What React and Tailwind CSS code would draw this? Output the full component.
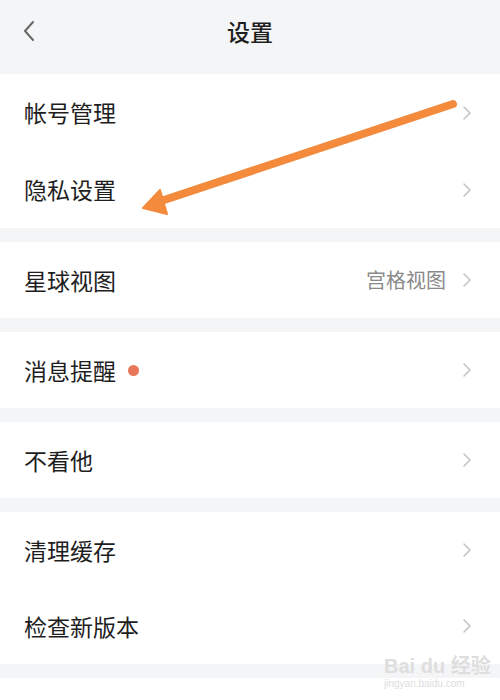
import React from "react";

const font = { fontFamily: '"Noto Sans CJK SC", "Noto Sans", sans-serif' };

function Chevron() {
  return (
    <svg width="10" height="16" viewBox="0 0 10 16" className="shrink-0">
      <path d="M2 2 L8 8 L2 14" fill="none" stroke="#c4c4c4" strokeWidth="1.6" strokeLinecap="round" strokeLinejoin="round" />
    </svg>
  );
}

function Row({ label, value, dot, tall }) {
  return (
    <div className={`flex items-center pl-6 pr-[28px] ${tall ? "h-[77px]" : "h-[76px]"}`}>
      <span className="text-[23px] leading-none text-[#1e1e1e]">{label}</span>
      {dot && <span className="ml-[12px] h-[11px] w-[11px] rounded-full bg-[#e9775a]" />}
      <div className="flex-1" />
      {value && <span className="mr-[16px] text-[20px] leading-none text-[#8a8a8a]">{value}</span>}
      <Chevron />
    </div>
  );
}

function Section({ children }) {
  return <div className="bg-white">{children}</div>;
}

export default function App() {
  return (
    <div className="relative h-[700px] w-[500px] overflow-hidden bg-[#f4f5f7]" style={font}>
      <div className="relative flex h-[74px] items-center justify-center">
        <svg width="12" height="22" viewBox="0 0 12 22" className="absolute left-[23px] top-[20px]">
          <path d="M10 2 L2 11 L10 20" fill="none" stroke="#666" strokeWidth="2" strokeLinecap="round" strokeLinejoin="round" />
        </svg>
        <span className="-mt-[12px] text-[23px] font-medium text-[#1e1e1e]">设置</span>
      </div>
      <div className="flex flex-col gap-[14px]">
        <Section>
          <Row label="帐号管理" tall />
          <Row label="隐私设置" tall />
        </Section>
        <Section>
          <Row label="星球视图" value="宫格视图" />
        </Section>
        <Section>
          <Row label="消息提醒" dot />
        </Section>
        <Section>
          <Row label="不看他" />
        </Section>
        <Section>
          <Row label="清理缓存" />
          <Row label="检查新版本" />
        </Section>
        <div className="h-[24px] bg-white" />
      </div>
      <svg className="pointer-events-none absolute left-0 top-0" width="500" height="700" viewBox="0 0 500 700">
        <line x1="453" y1="104" x2="158" y2="202" stroke="#f38a3c" strokeWidth="8" strokeLinecap="round" />
        <polygon points="143,208 160,190 167,214" fill="#f38a3c" stroke="#f38a3c" strokeWidth="2" strokeLinejoin="round" />
      </svg>
      <div className="pointer-events-none absolute left-[384px] top-[656px] flex flex-col items-start leading-none text-[#dedede]">
        <span className="text-[20px] font-bold" style={{ fontFamily: '"Liberation Sans", "Noto Sans CJK SC", sans-serif' }}>Bai du 经验</span>
        <span className="mt-[3px] text-[10px]" style={{ fontFamily: '"Liberation Sans", sans-serif' }}>jingyan.baidu.com</span>
      </div>
    </div>
  );
}
